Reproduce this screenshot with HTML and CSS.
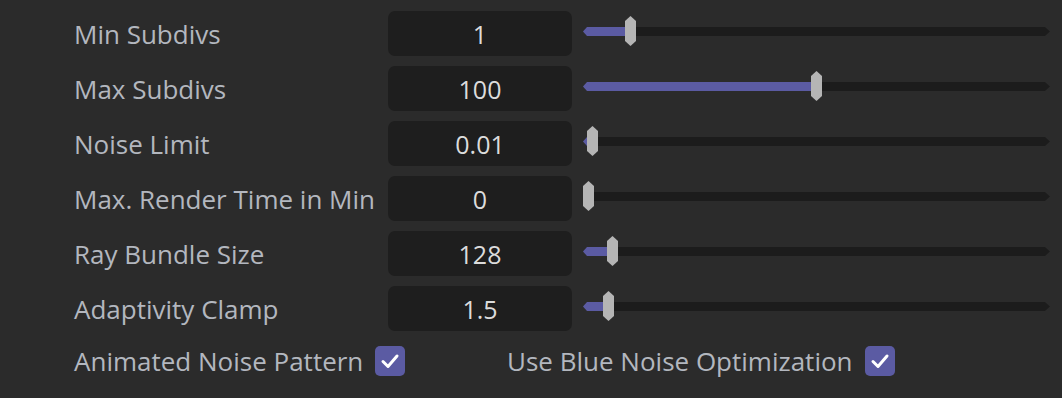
FILE: index.html
```html
<!DOCTYPE html>
<html>
<head>
<meta charset="utf-8">
<link rel="stylesheet" href="styles.css">
</head>
<body>
<div class="panel">
  <div class="row">
    <div class="label">Min Subdivs</div>
    <div class="field">1</div>
    <div class="slider"><div class="track" style="--p:47px"></div><div class="handle" style="left:42px"></div></div>
  </div>
  <div class="row">
    <div class="label">Max Subdivs</div>
    <div class="field">100</div>
    <div class="slider"><div class="track" style="--p:233px"></div><div class="handle" style="left:228px"></div></div>
  </div>
  <div class="row">
    <div class="label">Noise Limit</div>
    <div class="field">0.01</div>
    <div class="slider"><div class="track" style="--p:9px"></div><div class="handle" style="left:4px"></div></div>
  </div>
  <div class="row">
    <div class="label">Max. Render Time in Min</div>
    <div class="field">0</div>
    <div class="slider"><div class="track" style="--p:0px"></div><div class="handle" style="left:0px"></div></div>
  </div>
  <div class="row">
    <div class="label">Ray Bundle Size</div>
    <div class="field">128</div>
    <div class="slider"><div class="track" style="--p:29px"></div><div class="handle" style="left:24px"></div></div>
  </div>
  <div class="row">
    <div class="label">Adaptivity Clamp</div>
    <div class="field">1.5</div>
    <div class="slider"><div class="track" style="--p:25px"></div><div class="handle" style="left:20px"></div></div>
  </div>
  <div class="checks">
    <div class="check-item first">
      <span class="label">Animated Noise Pattern</span>
      <span class="box"><svg viewBox="0 0 30 30" width="30" height="30"><path d="M8 15.5 L13 20.5 L22 10" fill="none" stroke="#fff" stroke-width="3" stroke-linecap="round" stroke-linejoin="round"/></svg></span>
    </div>
    <div class="check-item">
      <span class="label">Use Blue Noise Optimization</span>
      <span class="box"><svg viewBox="0 0 30 30" width="30" height="30"><path d="M8 15.5 L13 20.5 L22 10" fill="none" stroke="#fff" stroke-width="3" stroke-linecap="round" stroke-linejoin="round"/></svg></span>
    </div>
  </div>
</div>
</body>
</html>
```

FILE: styles.css
```css
html, body {
  margin: 0;
  padding: 0;
  background: #2b2b2b;
}
body {
  width: 1062px;
  height: 398px;
  overflow: hidden;
  font-family: "Open Sans", "Noto Sans", sans-serif;
  color: #b3b7bf;
}
.panel {
  padding: 11px 0 0 74px;
  display: flex;
  flex-direction: column;
  gap: 10px;
}
.row {
  display: grid;
  grid-template-columns: 314px 184px 478px;
  height: 45px;
  align-items: center;
}
.label {
  font-size: 26px;
  white-space: nowrap;
}
.field {
  height: 45px;
  background: #1e1e1e;
  border-radius: 7px;
  display: flex;
  align-items: center;
  justify-content: center;
  font-size: 25px;
  color: #dcdcdc;
}
.slider {
  position: relative;
  height: 45px;
  margin-left: 11px;
}
.track {
  position: absolute;
  left: 0;
  right: 0;
  top: 16px;
  height: 9px;
  background: linear-gradient(to right, #5b5ba3 var(--p), #1c1c1c var(--p));
  clip-path: polygon(4px 0, calc(100% - 5px) 0, 100% 50%, calc(100% - 5px) 100%, 4px 100%, 0 50%);
}
.handle {
  position: absolute;
  top: 5px;
  width: 11px;
  height: 30px;
  background: #b5b5b5;
  clip-path: polygon(50% 0, 100% 5px, 100% calc(100% - 5px), 50% 100%, 0 calc(100% - 5px), 0 5px);
}
.checks {
  display: flex;
  align-items: center;
  height: 30px;
  margin-top: 5px;
}
.check-item {
  display: flex;
  align-items: center;
  gap: 12px;
}
.check-item.first {
  width: 433px;
}
.box {
  width: 30px;
  height: 30px;
  border-radius: 5px;
  background: #5b5ba3;
  display: block;
}
.box svg {
  display: block;
}
```
